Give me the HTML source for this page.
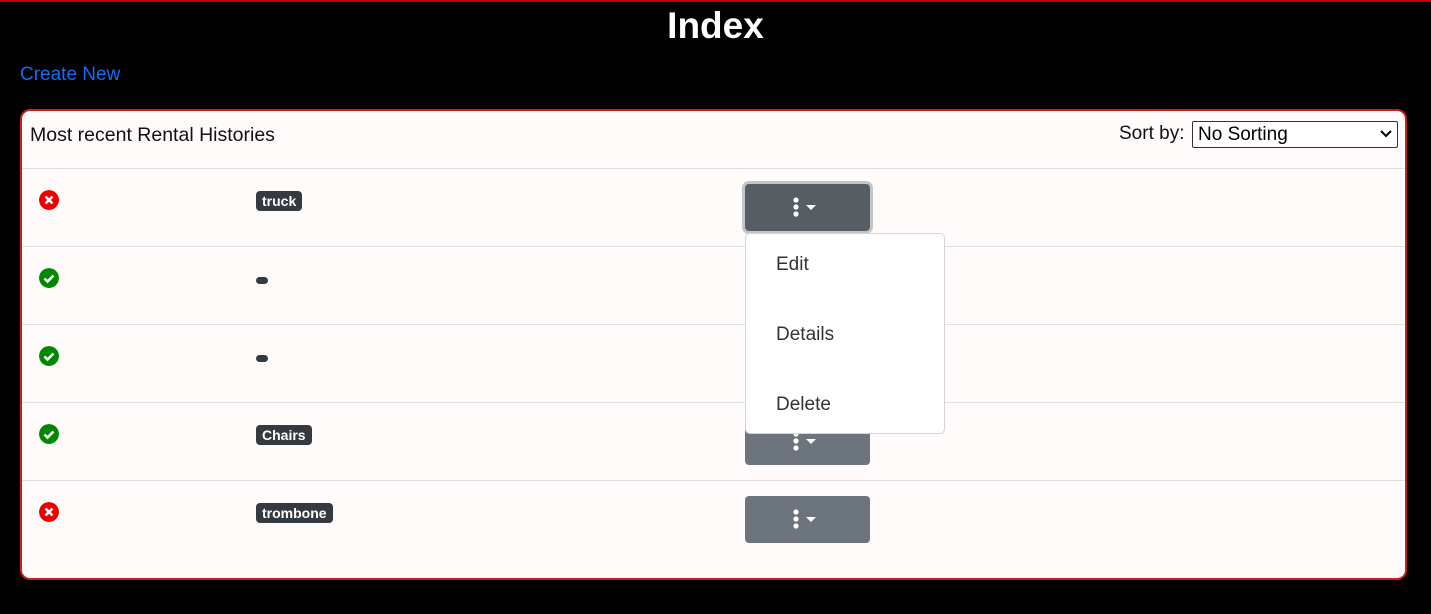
<!DOCTYPE html>
<html><head><style>
body{margin:0;background:#000;font-family:"Liberation Sans",sans-serif;width:1431px;height:614px;overflow:hidden;position:relative;border-top:2px solid #b00;box-sizing:border-box}
h1{margin:0;position:absolute;top:3px;left:0;width:100%;text-align:center;color:#fff;font-size:37px;font-weight:bold}
.cn{position:absolute;left:20px;top:62px;color:#0d6efd;font-size:19px}
.card{position:absolute;left:20px;top:107px;width:1383px;height:467px;border:2px solid #c8201a;border-radius:10px;background:#fffbfa}
.hd{position:absolute;left:8px;top:13px;font-size:19.5px;color:#111}
.sort{position:absolute;left:1097px;top:12px;font-size:19px;color:#111}
.sel{position:absolute;left:1170px;top:10px;width:206px;height:27px;border:1px solid #333;border-radius:2px;background:#fff;font-size:19px;padding-left:5px;box-sizing:border-box;line-height:25px}
.sel svg{position:absolute;right:5px;top:8px}
.line{position:absolute;left:0;width:1383px;height:1px;background:#dde0e6}
.ic{position:absolute;left:17px;width:20px;height:20px;border-radius:50%}
.badge{position:absolute;left:234px;background:#343a40;color:#fff;font-weight:bold;font-size:14px;padding:2px 6px;border-radius:4px;line-height:16px}
.dot{position:absolute;left:234px;width:12px;height:7px;border-radius:4px;background:#343a40}
.btn{position:absolute;left:723px;width:125px;height:47px;background:#6c757d;border-radius:4px}
.btn svg{position:absolute;left:45px;top:13px}
.dd{position:absolute;left:723px;top:122px;width:198px;height:199px;background:#fff;border:1px solid #d6d6d6;border-radius:5px}
.dd div{position:absolute;left:30px;font-size:19px;color:#333}
</style></head><body>
<h1>Index</h1>
<div class="cn">Create New</div>
<div class="card">
<div class="hd">Most recent Rental Histories</div>
<div class="sort">Sort by:</div>
<div class="sel">No Sorting<svg width="12" height="8" viewBox="0 0 12 8"><path d="M1 1l5 5 5-5" stroke="#000" stroke-width="2" fill="none"/></svg></div>
<div class="line" style="top:57px"></div>
<div class="line" style="top:135px"></div>
<div class="line" style="top:213px"></div>
<div class="line" style="top:291px"></div>
<div class="line" style="top:369px"></div>

<svg class="ic" style="top:79px" viewBox="0 0 20 20"><circle cx="10" cy="10" r="10" fill="#e00"/><path d="M6.5 6.5l7 7M13.5 6.5l-7 7" stroke="#fff" stroke-width="2.6"/></svg>
<svg class="ic" style="top:157px" viewBox="0 0 20 20"><circle cx="10" cy="10" r="10" fill="#080"/><path d="M5.5 10.5l3 3 6-6" stroke="#fff" stroke-width="2.6" fill="none"/></svg>
<svg class="ic" style="top:235px" viewBox="0 0 20 20"><circle cx="10" cy="10" r="10" fill="#080"/><path d="M5.5 10.5l3 3 6-6" stroke="#fff" stroke-width="2.6" fill="none"/></svg>
<svg class="ic" style="top:313px" viewBox="0 0 20 20"><circle cx="10" cy="10" r="10" fill="#080"/><path d="M5.5 10.5l3 3 6-6" stroke="#fff" stroke-width="2.6" fill="none"/></svg>
<svg class="ic" style="top:391px" viewBox="0 0 20 20"><circle cx="10" cy="10" r="10" fill="#e00"/><path d="M6.5 6.5l7 7M13.5 6.5l-7 7" stroke="#fff" stroke-width="2.6"/></svg>

<div class="badge" style="top:80px">truck</div>
<div class="dot" style="top:166px"></div>
<div class="dot" style="top:244px"></div>
<div class="badge" style="top:314px">Chairs</div>
<div class="badge" style="top:392px">trombone</div>

<div class="btn" style="top:73px;background:#565e64;box-shadow:0 0 0 3px #c3c5c8"><svg width="36" height="22"><circle cx="6" cy="3" r="2.6" fill="#fff"/><circle cx="6" cy="10" r="2.6" fill="#fff"/><circle cx="6" cy="17" r="2.6" fill="#fff"/><path d="M16 8h10l-5 5z" fill="#fff"/></svg></div>
<div class="btn" style="top:151px"></div>
<div class="btn" style="top:229px"></div>
<div class="btn" style="top:307px"><svg width="36" height="22"><circle cx="6" cy="3" r="2.6" fill="#fff"/><circle cx="6" cy="10" r="2.6" fill="#fff"/><circle cx="6" cy="17" r="2.6" fill="#fff"/><path d="M16 8h10l-5 5z" fill="#fff"/></svg></div>
<div class="btn" style="top:385px"><svg width="36" height="22"><circle cx="6" cy="3" r="2.6" fill="#fff"/><circle cx="6" cy="10" r="2.6" fill="#fff"/><circle cx="6" cy="17" r="2.6" fill="#fff"/><path d="M16 8h10l-5 5z" fill="#fff"/></svg></div>
<div class="dd"><div style="top:20px">Edit</div><div style="top:90px">Details</div><div style="top:160px">Delete</div></div>
</div>
</body></html>
